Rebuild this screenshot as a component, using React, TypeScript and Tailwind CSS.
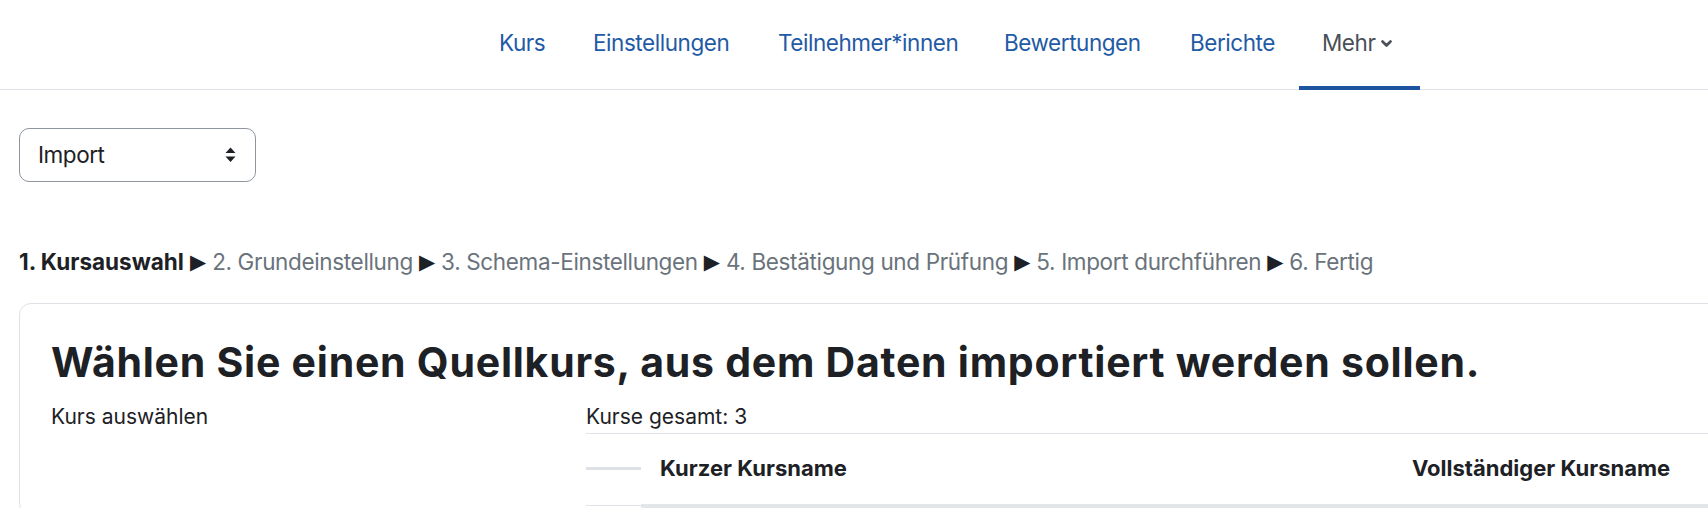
import React from "react";

const navItems = [
  { label: "Kurs", w: "w-[94px]" },
  { label: "Einstellungen", w: "w-[185px]" },
  { label: "Teilnehmer*innen", w: "w-[226px]" },
  { label: "Bewertungen", w: "w-[186px]" },
  { label: "Berichte", w: "w-[132px]" },
];

const steps = [
  "2. Grundeinstellung",
  "3. Schema-Einstellungen",
  "4. Bestätigung und Prüfung",
  "5. Import durchführen",
  "6. Fertig",
];

export default function App() {
  return (
    <div className="w-[1708px] h-[508px] overflow-hidden bg-white font-['Inter',sans-serif] text-[#1d2125]">
      {/* Secondary navigation */}
      <nav className="h-[90px] border-b border-[#dee2e6] flex pl-[476px]">
        {navItems.map((it) => (
          <div
            key={it.label}
            className={`${it.w} pl-[23px] pb-[4px] flex items-center text-[22.5px] tracking-[-0.45px] text-[#1f5aa6] whitespace-nowrap`}
          >
            {it.label}
          </div>
        ))}
        <div className="relative w-[121px] pl-[23px] pb-[4px] flex items-center text-[22.5px] tracking-[-0.45px] text-[#495057] whitespace-nowrap">
          <span>Mehr</span>
          <svg className="ml-[6px] mt-[2px]" width="11" height="8" viewBox="0 0 11 8" fill="none">
            <path d="M1.5 1.5 L5.5 5.5 L9.5 1.5" stroke="#495057" strokeWidth="2.6" strokeLinecap="round" strokeLinejoin="round" />
          </svg>
          <div className="absolute left-0 right-0 bottom-[-1px] h-[4px] bg-[#1c54a0]" />
        </div>
      </nav>

      {/* Select */}
      <div className="ml-[19px] mt-[38px] w-[237px] h-[54px] border border-[#8f959e] rounded-[10px] flex items-center justify-between pl-[18px] pr-[19px] text-[22.5px] tracking-[-0.45px] text-[#1d2125]">
        <span>Import</span>
        <svg width="11" height="16" viewBox="0 0 11 16">
          <path d="M5.5 0.5 L10.5 6 L0.5 6 Z" fill="#1d2125" />
          <path d="M0.5 9.5 L10.5 9.5 L5.5 15 Z" fill="#1d2125" />
        </svg>
      </div>

      {/* Stepper */}
      <div className="ml-[19px] mt-[63px] h-[34px] text-[22.5px] leading-[1.5] whitespace-nowrap flex items-center">
        <span className="font-bold text-[#1d2125]">1. Kursauswahl</span>
        {steps.map((s) => (
          <React.Fragment key={s}>
            <span className="text-[#1d2125] text-[21px] leading-none mx-[6px] font-['DejaVu_Sans',sans-serif]">▶</span>
            <span className="text-[#6a737b] tracking-[-0.35px]">{s}</span>
          </React.Fragment>
        ))}
      </div>

      {/* Card */}
      <div className="ml-[19px] mt-[24px] w-[1740px] border border-[#dee2e6] rounded-[12px] pt-[34px] pl-[31px]">
        <h2 className="text-[41px] leading-[1.2] tracking-[0.75px] font-bold text-[#1d2125] whitespace-nowrap">
          Wählen Sie einen Quellkurs, aus dem Daten importiert werden sollen.
        </h2>
        <div className="mt-[14px] flex">
          <div className="w-[535px] text-[21px] leading-[1.5]">Kurs auswählen</div>
          <div className="flex-1">
            <div className="text-[21px] leading-[1.5]">Kurse gesamt: 3</div>
            <div className="border-t border-[#dee2e6]">
              <div className="h-[70px] flex items-center">
                <div className="w-[55px] flex items-center">
                  <div className="h-[3px] w-[55px] bg-[#dee2e6]" />
                </div>
                <div className="w-[752px] pl-[19px] text-[22px] font-bold text-[#1d2125] whitespace-nowrap">
                  Kurzer Kursname
                </div>
                <div className="pl-[19px] text-[22px] font-bold text-[#1d2125] whitespace-nowrap">
                  Vollständiger Kursname
                </div>
              </div>
              <div className="flex h-[10px]">
                <div className="w-[55px] mt-[1px] border-t border-[#dee2e6]" />
                <div className="flex-1 bg-[#e3e5e8]" />
              </div>
            </div>
          </div>
        </div>
      </div>
    </div>
  );
}
